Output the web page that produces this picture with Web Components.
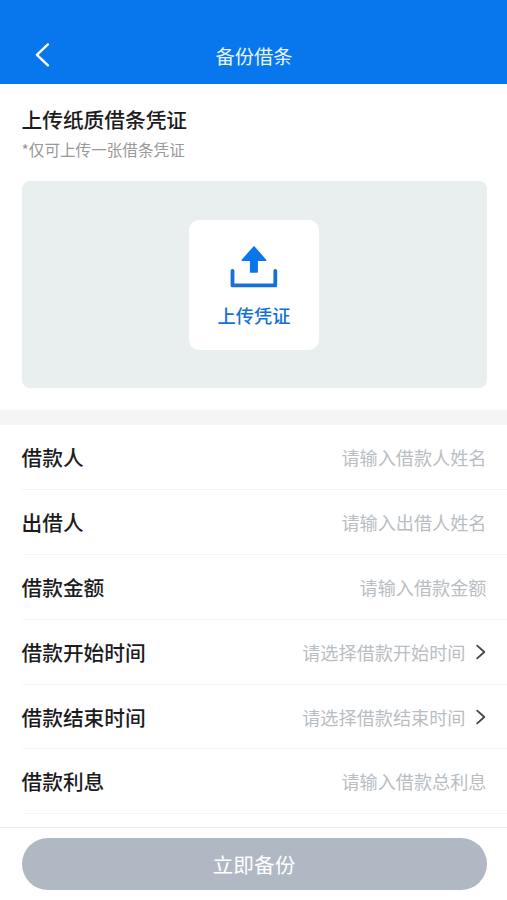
<!DOCTYPE html>
<html lang="zh-CN">
<head>
<meta charset="utf-8">
<title>备份借条</title>
<style>
html, body { margin: 0; height: 100%; }
body { font-family: "Noto Sans CJK SC", sans-serif; color: #1c1c1e; background: #fff; overflow: hidden; }
</style>
</head>
<body>
<backup-page></backup-page>
<script>
const define = (name, html) => {
  const template = document.createElement('template');
  template.innerHTML = html;
  customElements.define(name, class extends HTMLElement {
    constructor() {
      super();
      this.attachShadow({ mode: 'open' }).append(template.content.cloneNode(true));
    }
  });
};

define('nav-bar', `
<style>
:host { display: grid; grid-template-columns: 60px 1fr 59px; align-items: center; box-sizing: border-box; height: 83.5px; padding-top: 28px; background: #0877ed; color: #e9f4ff; font-size: 19.3px; line-height: 28px; text-align: center; }
svg { display: block; margin: 0 0 1px 34px; }
</style>
<svg width="17" height="26" viewBox="0 0 17 26" fill="none" stroke="#fff" stroke-width="2.4" stroke-linecap="round" stroke-linejoin="round"><path d="M13.9 2.4 2.9 12.8 13.9 23.3"/></svg>
<span><slot></slot></span>`);

define('upload-tile', `
<style>
:host { display: flex; flex-direction: column; align-items: center; box-sizing: border-box; width: 130px; height: 130px; padding-top: 25px; border-radius: 10px; background: #fff; color: #1270dc; font-size: 18.2px; font-weight: 500; line-height: 26px; }
svg { display: block; margin-bottom: 14px; }
</style>
<svg width="48" height="43" viewBox="0 0 48 43"><path d="M24 2 35.6 15.2H27.1V27H20.7V15.2H12.3Z" fill="#0877ed" stroke="#0877ed" stroke-width="1.6" stroke-linejoin="round"/><path d="M2.5 25.8V40.4H45.3V25.8" fill="none" stroke="#176fd8" stroke-width="3.8" stroke-linecap="round" stroke-linejoin="round"/></svg>
<span><slot></slot></span>`);

define('upload-section', `
<style>
:host { display: block; box-sizing: border-box; height: 326px; padding: 20px 20.5px 0 21.5px; }
h1 { margin: 0; font-size: 20.7px; font-weight: 500; line-height: 30px; }
p { margin: 3px 0 0; color: #999; font-size: 15.6px; line-height: 24px; }
.drop { display: grid; place-items: center; height: 207px; margin-top: 20.5px; border-radius: 8px; background: #e9eeef; }
</style>
<h1><slot name="title"></slot></h1>
<p><slot name="note"></slot></p>
<div class="drop"><slot></slot></div>`);

define('form-row', `
<style>
:host { display: flex; align-items: center; justify-content: space-between; box-sizing: border-box; height: 64.9px; margin-left: 21.5px; padding-right: 20.5px; border-bottom: 1px solid #f5f5f5; font-size: 20.7px; line-height: 30px; }
.label { font-weight: 500; }
.value { display: flex; align-items: center; color: #b9bec3; font-size: 18.15px; }
svg { display: none; margin-left: 9px; }
:host([picker]) svg { display: block; }
</style>
<span class="label"><slot></slot></span>
<span class="value"><slot name="hint"></slot><svg width="12" height="18" viewBox="0 0 12 18" fill="none" stroke="#444" stroke-width="1.8" stroke-linecap="round" stroke-linejoin="round"><path d="M2.2 2.6 9.3 9 2.2 15.4"/></svg></span>`);

define('action-bar', `
<style>
:host { display: block; box-sizing: border-box; height: 73px; padding: 10px 20.5px 0 21.5px; border-top: 1px solid #eee; background: #fff; }
button { display: block; width: 100%; height: 52px; padding: 0; border: 0; border-radius: 26px; background: #b0b9c3; color: #fff; font: inherit; font-size: 20.7px; line-height: 52px; }
</style>
<button type="button"><slot></slot></button>`);

define('backup-page', `
<style>
:host { display: flex; flex-direction: column; height: 900px; }
.gap { height: 15.5px; background: #f5f5f5; }
.form { flex: 1; min-height: 0; overflow: hidden; }
</style>
<nav-bar>备份借条</nav-bar>
<upload-section>
  <span slot="title">上传纸质借条凭证</span>
  <span slot="note">*仅可上传一张借条凭证</span>
  <upload-tile>上传凭证</upload-tile>
</upload-section>
<div class="gap"></div>
<div class="form">
  <form-row>借款人<span slot="hint">请输入借款人姓名</span></form-row>
  <form-row>出借人<span slot="hint">请输入出借人姓名</span></form-row>
  <form-row>借款金额<span slot="hint">请输入借款金额</span></form-row>
  <form-row picker>借款开始时间<span slot="hint">请选择借款开始时间</span></form-row>
  <form-row picker>借款结束时间<span slot="hint">请选择借款结束时间</span></form-row>
  <form-row>借款利息<span slot="hint">请输入借款总利息</span></form-row>
</div>
<action-bar>立即备份</action-bar>`);
</script>
</body>
</html>
